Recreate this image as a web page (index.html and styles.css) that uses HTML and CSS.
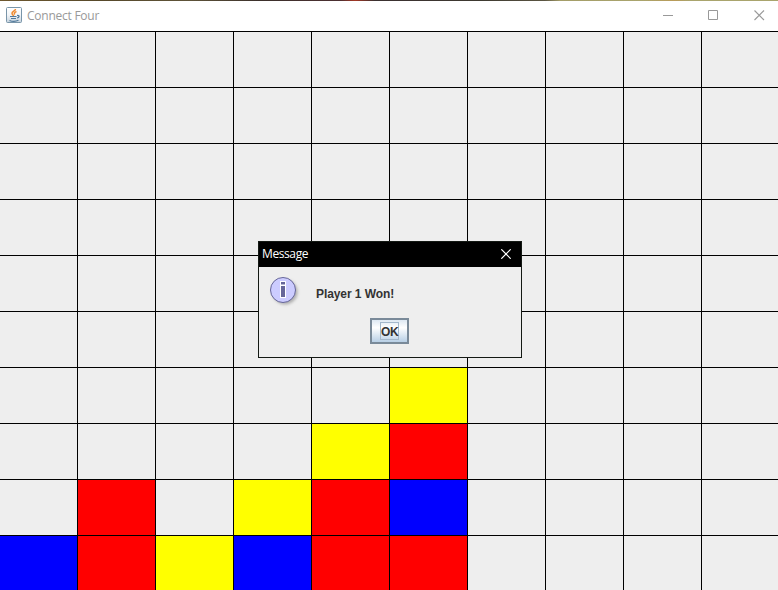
FILE: index.html
```
<!DOCTYPE html>
<html lang="en">
<head>
<meta charset="utf-8">
<title>Connect Four</title>
<link rel="stylesheet" href="styles.css">
</head>
<body>
<div class="window">
  <div class="backdrop-strip"></div>
  <header class="titlebar">
    <svg class="app-icon" width="16" height="16" viewBox="0 0 16 16">
      <defs><linearGradient id="tile" x1="0" y1="0" x2="0" y2="1"><stop offset="0" stop-color="#fff"/><stop offset=".5" stop-color="#f2f5f8"/><stop offset="1" stop-color="#c4d1dc"/></linearGradient></defs>
      <rect x=".5" y=".5" width="15" height="15" rx="1" fill="url(#tile)" stroke="#7995a9"/>
      <path d="M9.500 2C9.500 4 5.500 4.500 6 6.500 6.200 7.500 7.500 8 7.500 9M10.500 4.500C8 5.500 8 6.500 8.800 7.500" fill="none" stroke="#ee8b32" stroke-width="1.500"/>
      <path d="M4 9.500H10.500M11 8.500C14 8 13.500 10.500 11 11M5 11.500H10M3.500 13.500C6 14.500 10 14.500 12.500 13.300" fill="none" stroke="#507a9c" stroke-width="1.200"/>
    </svg>
    <h1 class="title">Connect Four</h1>
    <div class="controls">
      <svg width="11" height="11"><path d="M0 5.500H10" stroke="#999"/></svg>
      <svg width="11" height="11"><path d="M.5.5H9.500V9.500H.5Z" fill="none" stroke="#999"/></svg>
      <svg class="close" width="11" height="11"><path d="M.5.5L10 10M10 .5L.5 10" stroke="#999" stroke-width="1.100"/></svg>
    </div>
  </header>
  <main class="board" id="board"></main>
  <section class="dialog">
    <header class="dialog-bar">
      <h2 class="dialog-title">Message</h2>
      <svg class="dialog-close" width="10" height="10"><path d="M.3.3L9.700 9.700M9.700.3L.3 9.700" stroke="#fff" stroke-width="1.200"/></svg>
    </header>
    <div class="dialog-body">
      <div class="message">
        <svg class="info" width="32" height="32" viewBox="0 0 32 32">
          <defs><filter id="soft" x="-20%" y="-20%" width="150%" height="150%"><feGaussianBlur stdDeviation="1.400"/></filter></defs>
          <circle cx="16" cy="16" r="12.500" fill="#999" opacity=".75" filter="url(#soft)"/>
          <circle cx="14" cy="14" r="12.500" fill="#ccf" stroke="#669"/>
          <path d="M11 5H17V22H11Z" fill="#fff"/>
          <path d="M12 6H16V8.500H12ZM12 10H16V21H12Z" fill="#669"/>
        </svg>
        <p class="text">Player 1 Won!</p>
      </div>
      <button class="ok"><span class="ok-label">OK</span></button>
    </div>
  </section>
</div>
<script src="board.js"></script>
</body>
</html>
```
FILE: styles.css
```
* { box-sizing: border-box; }
body { margin: 0; background: #fff; }
h1, h2, p { margin: 0; font-weight: normal; }
svg { display: block; }
.window { position: relative; width: 778px; height: 590px; overflow: hidden; display: flex; flex-direction: column; }
.backdrop-strip {
  flex: none; height: 1px;
  background: linear-gradient(90deg, #6e582f 0, #57492a 100px, #5e5339 190px, #3b302b 260px, #4c2f31 340px, #a43825 355px, #3a3030 375px, #3d3930 480px, #5b5542 545px, #a49d68 560px, #a9a46d 640px, #b99b58 675px, #a9a46d 690px);
}
.titlebar { flex: none; height: 30px; display: flex; align-items: center; padding: 0 14px 0 6px; }
.app-icon { margin-top: -2px; }
.title { margin: -1px 0 0 5px; font: 12px/16px "Open Sans", sans-serif; letter-spacing: -0.25px; color: #999; }
.controls { margin: -1px -1px 0 auto; display: flex; gap: 34px; }
.close { margin-left: 1px; }
.board { flex: none; display: grid; grid-template-columns: repeat(10, 78px); grid-template-rows: repeat(10, 56px); background: #eee; }
.cell { border-top: 1px solid #000; border-right: 1px solid #000; }
.red { background: #f00; }
.blue { background: #00f; }
.yellow { background: #ff0; }
.dialog { position: absolute; left: 258px; top: 241px; width: 264px; height: 117px; border: 1px solid #141914; background: #eee; }
.dialog-bar { height: 25px; padding: 0 10px 0 3px; display: flex; align-items: center; justify-content: space-between; background: #000; }
.dialog-title { margin-top: -1px; font: 12px/16px "Open Sans", sans-serif; letter-spacing: -0.4px; color: #fff; }
.dialog-close { margin-top: -1px; }
.dialog-body { display: flex; flex-direction: column; align-items: flex-start; }
.message { align-self: stretch; height: 51px; display: flex; padding: 9px 0 0 10px; }
.text { margin: 10px 0 0 15px; font: bold 12px/16px "Liberation Sans", sans-serif; letter-spacing: -0.08px; color: #333; }
.ok { width: 39px; height: 26px; margin-left: 111px; padding: 0; display: grid; place-items: center; border: 2px solid #7a8a99; border-radius: 0; background: linear-gradient(#dde8f3 0, #fff 35%, #b8cfe5 100%); }
.ok-label { width: 19px; height: 18px; padding-top: 1px; border: 1px solid #a3b8cc; display: grid; place-items: center; font: bold 12px/16px "Liberation Sans", sans-serif; letter-spacing: -0.3px; color: #333; }
```
FILE: board.js
```
const rows = [
  "..........",
  "..........",
  "..........",
  "..........",
  "..........",
  "..........",
  ".....Y....",
  "....YR....",
  ".R.YRB....",
  "BRYBRR....",
];
const colors = { R: "red", B: "blue", Y: "yellow" };
const board = document.getElementById("board");
for (const row of rows) {
  for (const mark of row) {
    const cell = document.createElement("div");
    cell.className = "cell " + (colors[mark] || "");
    board.append(cell);
  }
}
```
